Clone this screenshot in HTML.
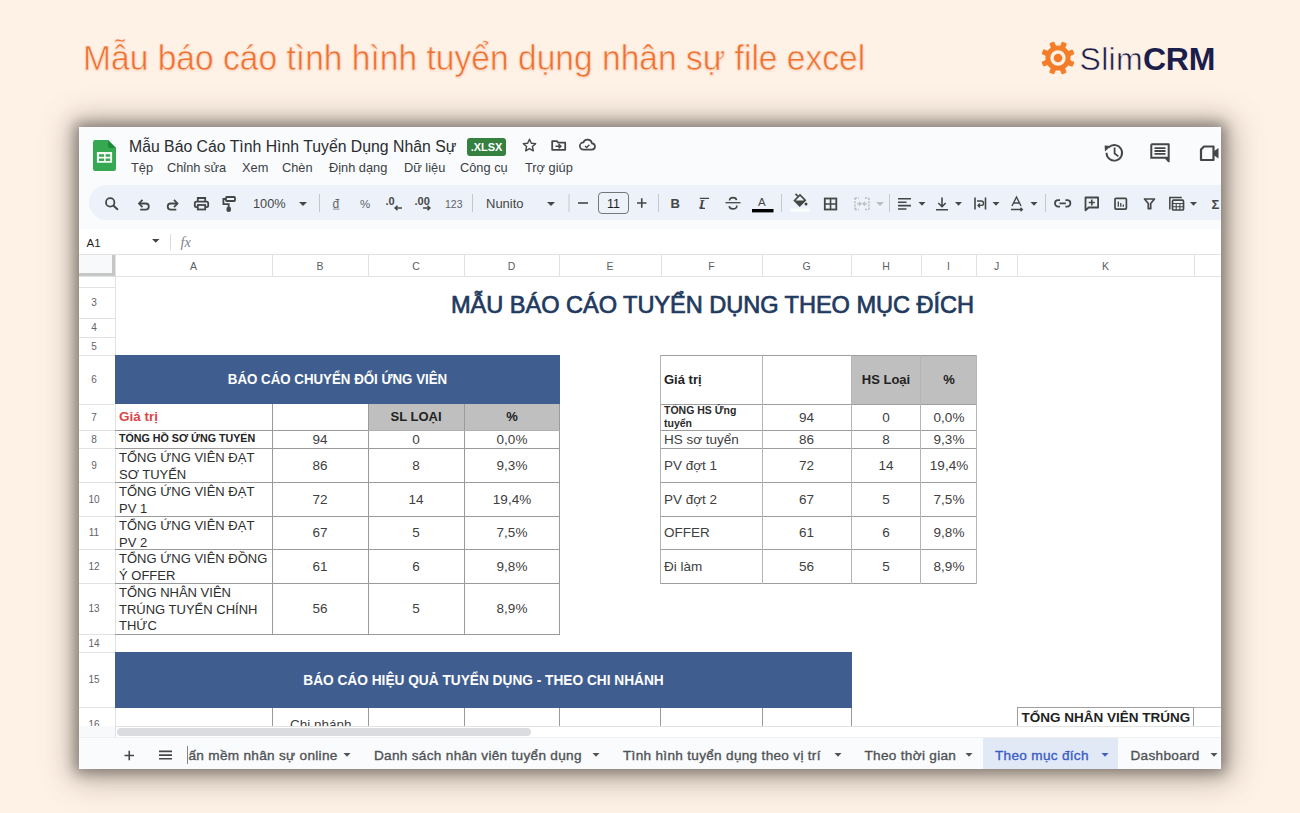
<!DOCTYPE html>
<html><head><meta charset="utf-8">
<style>
*{box-sizing:border-box}
html,body{margin:0;padding:0}
body{width:1300px;height:813px;background:#FEF1E6;position:relative;overflow:hidden;font-family:"Liberation Sans",sans-serif}
.a{position:absolute;white-space:nowrap}
#win{position:absolute;left:79px;top:127px;width:1142px;height:642px;background:#fff;overflow:hidden;box-shadow:0 0 13px 4px rgba(76,70,66,.56),2px 2px 30px 8px rgba(92,80,70,.42)}
#inner{position:absolute;left:-79px;top:-127px;width:1300px;height:813px}
.hl{position:absolute;height:1px;background:#E1E1E1}
.vl{position:absolute;width:1px;background:#E1E1E1}
.ic{position:absolute}
.tb{color:#444746}
</style></head><body>

<div class="a" id="ttl" style="left:83px;top:38.6px;font-size:33.6px;transform:scaleY(1.02);transform-origin:0 0;color:#F0702F;-webkit-text-stroke:0.5px #FEF1E6;text-shadow:0 1px 2px rgba(239,107,44,.25)">Mẫu báo cáo tình hình tuyển dụng nhân sự file excel</div>

<div id="logo" class="a" style="left:1040px;top:40px;height:36px;width:200px">
<svg class="ic" style="left:0;top:0" width="36" height="36" viewBox="-18 -18 36 36"><defs><linearGradient id="gg" x1="0" y1="-1" x2="0" y2="1"><stop offset="0" stop-color="#F5892C"/><stop offset="1" stop-color="#F47A28"/></linearGradient></defs><g fill="url(#gg)"><circle r="12.6"/><rect x="-2.6" y="-16.8" width="5.4" height="6.4" rx="1.2" transform="rotate(22.5)"/><rect x="-2.6" y="-16.8" width="5.4" height="6.4" rx="1.2" transform="rotate(67.5)"/><rect x="-2.6" y="-16.8" width="5.4" height="6.4" rx="1.2" transform="rotate(112.5)"/><rect x="-2.6" y="-16.8" width="5.4" height="6.4" rx="1.2" transform="rotate(157.5)"/><rect x="-2.6" y="-16.8" width="5.4" height="6.4" rx="1.2" transform="rotate(202.5)"/><rect x="-2.6" y="-16.8" width="5.4" height="6.4" rx="1.2" transform="rotate(247.5)"/><rect x="-2.6" y="-16.8" width="5.4" height="6.4" rx="1.2" transform="rotate(292.5)"/><rect x="-2.6" y="-16.8" width="5.4" height="6.4" rx="1.2" transform="rotate(337.5)"/></g><circle r="7.7" fill="#FEF1E6"/><circle r="4.3" fill="#F47A28"/></svg>
<div class="a" style="left:39.5px;top:1px;font-size:32px;line-height:36px;color:#1B1D4A;letter-spacing:0.3px"><span style="-webkit-text-stroke:0.55px #FEF1E6">Slim</span><b style="letter-spacing:-0.2px">CRM</b></div>
</div>

<div id="win"><div id="inner">

<!-- top chrome -->
<div class="a" style="left:79px;top:127px;width:1142px;height:102px;background:#F9FBFD"></div>
<!-- sheets icon -->
<svg class="ic" style="left:93px;top:140px" width="23" height="31" viewBox="0 0 23 31">
<path d="M2.2 0h12.8l8 8v20.8a2.2 2.2 0 0 1-2.2 2.2H2.2A2.2 2.2 0 0 1 0 28.8V2.2A2.2 2.2 0 0 1 2.2 0z" fill="#37A852"/>
<path d="M15 0l8 8h-5.8A2.2 2.2 0 0 1 15 5.8z" fill="#1E8A3C"/>
<path d="M3.9 12h15.2v10.8H3.9z M6 14.2v2.6h5v-2.6z M12.6 14.2v2.6h4.5v-2.6z M6 18.4v2.6h5v-2.6z M12.6 18.4v2.6h4.5v-2.6z" fill="#F4FBF5" fill-rule="evenodd"/>
</svg>
<div class="a" style="left:129px;top:138px;font-size:15.8px;color:#2A2C2E">Mẫu Báo Cáo Tình Hình Tuyển Dụng Nhân Sự</div>
<div class="a" style="left:467px;top:138px;width:39px;height:18px;border-radius:3px;background:#368040;color:#fff;font-size:11px;font-weight:bold;line-height:18px;text-align:center;letter-spacing:-0.1px">.XLSX</div>
<!-- star -->
<svg class="ic" style="left:521px;top:137px" width="17" height="17" viewBox="0 0 24 24"><path d="M12 3.2l2.6 5.6 6.1.6-4.6 4.1 1.3 6-5.4-3.1-5.4 3.1 1.3-6-4.6-4.1 6.1-.6z" fill="none" stroke="#444746" stroke-width="2" stroke-linejoin="round"/></svg>
<!-- folder move -->
<svg class="ic" style="left:0;top:0" width="1300" height="813"><path d="M552.2 141.2h4.6l1.4 1.5h7v7.1h-13z" fill="none" stroke="#444746" stroke-width="1.8" stroke-linejoin="round"/><path d="M555.5 146.3h5.2M558.6 144.2l2.2 2.1-2.2 2.1" fill="none" stroke="#444746" stroke-width="1.6"/>
<path d="M583.5 149.6h8.2a3.1 3.1 0 0 0 .3-6.2 4.5 4.5 0 0 0-8.6-1 3.6 3.6 0 0 0 .1 7.2z" fill="none" stroke="#444746" stroke-width="1.7"/><path d="M585 146l1.6 1.5 2.8-2.8" fill="none" stroke="#444746" stroke-width="1.3"/></svg>
<!-- menu -->
<div class="a" style="top:160px;font-size:12.8px;color:#3C4043">
<span class="a" style="left:131px">Tệp</span><span class="a" style="left:167px">Chỉnh sửa</span><span class="a" style="left:242px">Xem</span><span class="a" style="left:282px">Chèn</span><span class="a" style="left:329px">Định dạng</span><span class="a" style="left:404px">Dữ liệu</span><span class="a" style="left:460px">Công cụ</span><span class="a" style="left:525px">Trợ giúp</span>
</div>
<!-- right icons -->
<svg class="ic" style="left:0;top:0" width="1300" height="813"><path d="M1108.8 147.3A7.8 7.8 0 1 1 1106.5 152.8" fill="none" stroke="#444746" stroke-width="1.9"/><path d="M1104.6 145.6l6.2 0.4-5.8 5.6z" fill="#444746"/><path d="M1114.6 147.6v5.9l3.8 2.9" fill="none" stroke="#444746" stroke-width="1.8"/></svg>
<svg class="ic" style="left:1150px;top:143px" width="20" height="20" viewBox="0 0 20 20"><path d="M1.3 1.3h17.4v13.4H15.5l3.2 3.6V1.3" fill="none" stroke="#444746" stroke-width="2" stroke-linejoin="round"/><path d="M1.3 1.3v13.4h14.2" fill="none" stroke="#444746" stroke-width="2"/><path d="M4.5 5.2h11M4.5 8h11M4.5 10.8h11" stroke="#444746" stroke-width="1.8"/></svg>
<svg class="ic" style="left:1199px;top:145px" width="22" height="17" viewBox="0 0 22 17"><path d="M5 1.5h9.5v13.5H2V4.5z" fill="none" stroke="#444746" stroke-width="2.2" stroke-linejoin="round"/><path d="M14.5 6.5l5-3.5v10.5l-5-3.5z" fill="#444746"/></svg>
<!-- toolbar pill -->
<div class="a" style="left:89px;top:185px;width:1200px;height:35px;border-radius:18px;background:#EDF2FA"></div>

<svg class="ic" style="left:0;top:0" width="1300" height="813" viewBox="0 0 1300 813" font-family="Liberation Sans, sans-serif">
<g fill="none" stroke="#444746" stroke-width="1.8" stroke-linecap="butt">
<!-- search -->
<circle cx="110.2" cy="202.4" r="4.2"/><path d="M113.3 205.5l4.6 4.2" stroke-width="2"/>
<!-- undo -->
<path d="M139.5 203.5h6.2a3.1 3.1 0 0 1 0 6.2h-5.5"/><path d="M142.5 199.8l-3.5 3.7 3.5 3.7"/>
<!-- redo -->
<path d="M177 203.5h-6.2a3.1 3.1 0 0 0 0 6.2h5.5"/><path d="M174 199.8l3.5 3.7-3.5 3.7"/>
<!-- print -->
<path d="M197.8 201.2v-3.2h7.4v3.2"/><rect x="194.8" y="201.6" width="13.4" height="5.6" rx="1.6"/><rect x="197.8" y="205" width="7.4" height="4.5" fill="#EDF2FA"/>
<!-- paint format -->
<rect x="226" y="197" width="9" height="4" rx="0.8"/><path d="M226 199h-2.6v5.2h5.3v3.3"/><rect x="227" y="207.3" width="3.4" height="4" rx="0.6" fill="#444746" stroke-width="1"/>
<!-- dd arrows -->
</g>
<g fill="#444746">
<path d="M299 202h8l-4 4z"/>
<path d="M547 202h8l-4 4z"/>
<path d="M876 202h8l-4 4z" fill="#B9BCC0"/>
<path d="M918.5 202h7l-3.5 3.8z"/>
<path d="M955 202h7l-3.5 3.8z"/>
<path d="M992.5 202h7l-3.5 3.8z"/>
<path d="M1030.5 202h7l-3.5 3.8z"/>
<path d="M1190 202h7l-3.5 3.8z"/>
</g>
<!-- separators -->
<g fill="#C7C7C7"><rect x="319" y="194" width="1" height="18"/><rect x="472" y="194" width="1" height="18"/><rect x="568.5" y="194" width="1" height="18"/><rect x="658" y="194" width="1" height="18"/><rect x="781" y="194" width="1" height="18"/><rect x="889" y="194" width="1" height="18"/><rect x="1045" y="194" width="1" height="18"/></g>
<text x="253" y="208" font-size="12.8" fill="#444746">100%</text>
<text x="332.5" y="208" font-size="12" fill="#5F6368">đ</text><rect x="333" y="208.6" width="6.5" height="1" fill="#8A8D91"/>
<text x="360" y="208" font-size="11.5" fill="#5F6368">%</text>
<text x="385.5" y="204.5" font-size="11" font-weight="bold" fill="#444746">.0</text>
<text x="414.5" y="204.5" font-size="11" font-weight="bold" fill="#444746">.00</text>
<g fill="none" stroke="#444746" stroke-width="1.5"><path d="M395 208h7M397.5 205.7l-2.4 2.3 2.4 2.3"/><path d="M423 208h7M427.5 205.7l2.4 2.3-2.4 2.3"/></g>
<text x="445" y="207.5" font-size="10.5" fill="#5F6368">123</text>
<text x="486" y="208" font-size="13" fill="#444746">Nunito</text>
<path d="M578 203h10" stroke="#444746" stroke-width="1.6"/>
<rect x="598.5" y="192.5" width="30" height="21" rx="3.5" fill="none" stroke="#747775" stroke-width="1"/>
<text x="613.5" y="207.5" font-size="12.5" fill="#1F1F1F" text-anchor="middle">11</text>
<path d="M637 203h9.5M641.75 198.2v9.6" stroke="#444746" stroke-width="1.6"/>
<text x="670.5" y="208" font-size="13" font-weight="bold" fill="#444746">B</text>
<text x="699" y="208" font-size="13.5" font-style="italic" font-weight="bold" fill="#444746" font-family="Liberation Serif, serif">I</text>
<path d="M699.8 198.4h9.2M699.6 208.4h5.4" stroke="#444746" stroke-width="1.4"/>
<!-- strikethrough S -->
<path d="M729.5 200.6c0-2.5 2-3 3.5-3s3.3.6 3.5 2.6M736.8 205.5c0.3 2.6-1.6 3.4-3.8 3.4s-3.6-0.9-3.8-2.8" fill="none" stroke="#444746" stroke-width="1.6"/>
<path d="M725.5 202.7h15" stroke="#444746" stroke-width="1.3"/>
<text x="758" y="206" font-size="11.5" fill="#444746">A</text>
<rect x="752" y="209" width="21.5" height="3.4" fill="#000"/>
<!-- fill bucket -->
<path d="M795.5 193.8l2.2 2.2M794.5 200.5l5.5-5.5 5.2 5.2-5.5 5.5z" fill="none" stroke="#444746" stroke-width="1.7"/><path d="M794.5 200.5h10.7l-5.3 5.4z" fill="#444746"/><circle cx="806" cy="204" r="1.5" fill="#444746"/>
<rect x="790" y="208.5" width="20" height="3.5" rx="1.5" fill="#FAFBFD"/>
<!-- borders -->
<rect x="824.8" y="198.5" width="11.5" height="11" fill="none" stroke="#444746" stroke-width="1.8"/><path d="M830.55 198.5v11M824.8 204h11.5" stroke="#444746" stroke-width="1.6"/>
<!-- merge disabled -->
<g fill="none" stroke="#B9BCC0" stroke-width="1.5" stroke-dasharray="2 1.2"><path d="M855 198v11.5M869 198v11.5M855 198h4M855 209.5h4M865 198h4M865 209.5h4"/></g><path d="M857 203.8h4M863 203.8h4M859 202l2 1.8-2 1.8M865 202l-2 1.8 2 1.8" fill="none" stroke="#B9BCC0" stroke-width="1.2"/>
<!-- align left -->
<path d="M898 198.8h13M898 202.2h8.5M898 205.6h13M898 209h8.5" stroke="#444746" stroke-width="1.6"/>
<path d="M898 198.8h13M898 202.2h13M898 205.6h13M898 209h13" stroke="#444746" stroke-width="1.6" opacity="0"/>
<!-- valign bottom -->
<path d="M942 197.5v9M938.3 203l3.7 3.7 3.7-3.7M936 209.8h12" fill="none" stroke="#444746" stroke-width="1.6"/>
<!-- wrap -->
<path d="M975 197.5v12M985.5 197.5v12" stroke="#444746" stroke-width="1.6"/><path d="M977 201h4.3a2.2 2.2 0 0 1 0 4.4h-2.5M980 203.4l-2 2 2 2" fill="none" stroke="#444746" stroke-width="1.4"/>
<!-- rotate A -->
<path d="M1012 206l4.5-9 4.5 9M1013.6 203h5.8M1011 209.5h11M1020.5 207.8l1.8 1.7-1.8 1.7" fill="none" stroke="#444746" stroke-width="1.4"/>
<!-- link -->
<path d="M1060 200.2h-1.8a3.2 3.2 0 0 0 0 6.4h1.8M1065.4 200.2h1.8a3.2 3.2 0 0 1 0 6.4h-1.8M1059.5 203.4h6.4" fill="none" stroke="#444746" stroke-width="1.8"/>
<!-- comment add -->
<path d="M1085.5 197.5h12.6v10h-9.5l-3.1 2.8z" fill="none" stroke="#444746" stroke-width="1.8" stroke-linejoin="round"/><path d="M1091.8 199.5v6M1088.8 202.5h6" stroke="#444746" stroke-width="1.6"/>
<!-- chart -->
<rect x="1115" y="198.3" width="11.4" height="10.8" rx="1" fill="none" stroke="#444746" stroke-width="1.7"/><path d="M1118.3 201.5v5.3M1120.8 203v3.8M1123.3 204.5v2.3" stroke="#444746" stroke-width="1.3"/>
<!-- filter -->
<path d="M1144.5 199h10l-3.8 4.5v5.2h-2.4v-5.2z" fill="none" stroke="#444746" stroke-width="1.7" stroke-linejoin="round"/>
<!-- table functions -->
<path d="M1169.8 209.5v-12h12" fill="none" stroke="#444746" stroke-width="1.5"/><rect x="1172.5" y="200.2" width="11" height="9.8" rx="1" fill="none" stroke="#444746" stroke-width="1.7"/><path d="M1172.5 203.5h11M1176.2 203.5v6.5M1179.9 203.5v6.5M1172.5 206.8h11" stroke="#444746" stroke-width="1.1"/>
<text x="1211.5" y="208.5" font-size="13" font-weight="bold" fill="#444746">Σ</text>
</svg>
<!--GRID-->
<div class="a" style="left:79px;top:229px;width:1142px;height:26px;background:#FFFFFF"></div>
<div class="a" style="left:86.5px;top:237.5px;font-size:11.5px;color:#1F1F1F;font-weight:normal;line-height:1;">A1</div>
<svg class="ic" style="left:0;top:0" width="1300" height="813"><path d="M152 239h7.5l-3.75 3.8z" fill="#444746"/><rect x="170" y="234" width="1" height="16" fill="#DADCE0"/><text x="180.5" y="247" font-family="Liberation Serif, serif" font-style="italic" font-size="14.5" fill="#80868B">fx</text></svg>
<div class="a" style="left:79px;top:255px;width:1142px;height:21px;background:#FFFFFF"></div>
<div class="a" style="left:79px;top:254px;width:1142px;height:1px;background:#E1E3E3"></div>
<div class="a" style="left:79px;top:276px;width:1142px;height:1px;background:#E1E3E3"></div>
<div class="a" style="left:115px;top:255px;width:1px;height:21px;background:#E1E3E3"></div>
<div class="a" style="left:115px;top:261px;width:157px;text-align:center;font-size:10.5px;color:#5A5E62;font-weight:normal;line-height:1;">A</div>
<div class="a" style="left:272px;top:255px;width:1px;height:21px;background:#E1E3E3"></div>
<div class="a" style="left:272px;top:261px;width:96px;text-align:center;font-size:10.5px;color:#5A5E62;font-weight:normal;line-height:1;">B</div>
<div class="a" style="left:368px;top:255px;width:1px;height:21px;background:#E1E3E3"></div>
<div class="a" style="left:368px;top:261px;width:96px;text-align:center;font-size:10.5px;color:#5A5E62;font-weight:normal;line-height:1;">C</div>
<div class="a" style="left:464px;top:255px;width:1px;height:21px;background:#E1E3E3"></div>
<div class="a" style="left:464px;top:261px;width:95px;text-align:center;font-size:10.5px;color:#5A5E62;font-weight:normal;line-height:1;">D</div>
<div class="a" style="left:559px;top:255px;width:1px;height:21px;background:#E1E3E3"></div>
<div class="a" style="left:559px;top:261px;width:102px;text-align:center;font-size:10.5px;color:#5A5E62;font-weight:normal;line-height:1;">E</div>
<div class="a" style="left:661px;top:255px;width:1px;height:21px;background:#E1E3E3"></div>
<div class="a" style="left:661px;top:261px;width:101px;text-align:center;font-size:10.5px;color:#5A5E62;font-weight:normal;line-height:1;">F</div>
<div class="a" style="left:762px;top:255px;width:1px;height:21px;background:#E1E3E3"></div>
<div class="a" style="left:762px;top:261px;width:89px;text-align:center;font-size:10.5px;color:#5A5E62;font-weight:normal;line-height:1;">G</div>
<div class="a" style="left:851px;top:255px;width:1px;height:21px;background:#E1E3E3"></div>
<div class="a" style="left:851px;top:261px;width:70px;text-align:center;font-size:10.5px;color:#5A5E62;font-weight:normal;line-height:1;">H</div>
<div class="a" style="left:921px;top:255px;width:1px;height:21px;background:#E1E3E3"></div>
<div class="a" style="left:921px;top:261px;width:55px;text-align:center;font-size:10.5px;color:#5A5E62;font-weight:normal;line-height:1;">I</div>
<div class="a" style="left:976px;top:255px;width:1px;height:21px;background:#E1E3E3"></div>
<div class="a" style="left:976px;top:261px;width:41px;text-align:center;font-size:10.5px;color:#5A5E62;font-weight:normal;line-height:1;">J</div>
<div class="a" style="left:1017px;top:255px;width:1px;height:21px;background:#E1E3E3"></div>
<div class="a" style="left:1017px;top:261px;width:177px;text-align:center;font-size:10.5px;color:#5A5E62;font-weight:normal;line-height:1;">K</div>
<div class="a" style="left:1194px;top:255px;width:1px;height:21px;background:#E1E3E3"></div>
<div class="a" style="left:1194px;top:261px;width:106px;text-align:center;font-size:10.5px;color:#5A5E62;font-weight:normal;line-height:1;">L</div>
<div class="a" style="left:79px;top:255px;width:36px;height:21px;background:#F8F9FA"></div>
<div class="a" style="left:112px;top:255px;width:3px;height:21px;background:#C4C7C5"></div>
<div class="a" style="left:79px;top:273px;width:36px;height:3px;background:#C4C7C5"></div>
<div class="a" style="left:115px;top:276px;width:1px;height:450px;background:#E1E3E3"></div>
<div class="a" style="left:79px;top:287px;width:36px;height:1px;background:#E1E3E3"></div>
<div class="a" style="left:79px;top:318px;width:36px;height:1px;background:#E1E3E3"></div>
<div class="a" style="left:76px;top:298.0px;width:36px;text-align:center;font-size:10px;color:#5F6368;font-weight:normal;line-height:1;">3</div>
<div class="a" style="left:79px;top:337px;width:36px;height:1px;background:#E1E3E3"></div>
<div class="a" style="left:76px;top:323.0px;width:36px;text-align:center;font-size:10px;color:#5F6368;font-weight:normal;line-height:1;">4</div>
<div class="a" style="left:79px;top:355px;width:36px;height:1px;background:#E1E3E3"></div>
<div class="a" style="left:76px;top:341.5px;width:36px;text-align:center;font-size:10px;color:#5F6368;font-weight:normal;line-height:1;">5</div>
<div class="a" style="left:79px;top:404px;width:36px;height:1px;background:#E1E3E3"></div>
<div class="a" style="left:76px;top:375.0px;width:36px;text-align:center;font-size:10px;color:#5F6368;font-weight:normal;line-height:1;">6</div>
<div class="a" style="left:79px;top:430px;width:36px;height:1px;background:#E1E3E3"></div>
<div class="a" style="left:76px;top:412.5px;width:36px;text-align:center;font-size:10px;color:#5F6368;font-weight:normal;line-height:1;">7</div>
<div class="a" style="left:79px;top:448px;width:36px;height:1px;background:#E1E3E3"></div>
<div class="a" style="left:76px;top:434.5px;width:36px;text-align:center;font-size:10px;color:#5F6368;font-weight:normal;line-height:1;">8</div>
<div class="a" style="left:79px;top:482px;width:36px;height:1px;background:#E1E3E3"></div>
<div class="a" style="left:76px;top:460.5px;width:36px;text-align:center;font-size:10px;color:#5F6368;font-weight:normal;line-height:1;">9</div>
<div class="a" style="left:79px;top:516px;width:36px;height:1px;background:#E1E3E3"></div>
<div class="a" style="left:76px;top:494.5px;width:36px;text-align:center;font-size:10px;color:#5F6368;font-weight:normal;line-height:1;">10</div>
<div class="a" style="left:79px;top:549px;width:36px;height:1px;background:#E1E3E3"></div>
<div class="a" style="left:76px;top:528.0px;width:36px;text-align:center;font-size:10px;color:#5F6368;font-weight:normal;line-height:1;">11</div>
<div class="a" style="left:79px;top:583px;width:36px;height:1px;background:#E1E3E3"></div>
<div class="a" style="left:76px;top:561.5px;width:36px;text-align:center;font-size:10px;color:#5F6368;font-weight:normal;line-height:1;">12</div>
<div class="a" style="left:79px;top:634px;width:36px;height:1px;background:#E1E3E3"></div>
<div class="a" style="left:76px;top:604.0px;width:36px;text-align:center;font-size:10px;color:#5F6368;font-weight:normal;line-height:1;">13</div>
<div class="a" style="left:79px;top:652px;width:36px;height:1px;background:#E1E3E3"></div>
<div class="a" style="left:76px;top:638.5px;width:36px;text-align:center;font-size:10px;color:#5F6368;font-weight:normal;line-height:1;">14</div>
<div class="a" style="left:79px;top:707px;width:36px;height:1px;background:#E1E3E3"></div>
<div class="a" style="left:76px;top:675.0px;width:36px;text-align:center;font-size:10px;color:#5F6368;font-weight:normal;line-height:1;">15</div>
<div class="a" style="left:79px;top:741px;width:36px;height:1px;background:#E1E3E3"></div>
<div class="a" style="left:76px;top:719.5px;width:36px;text-align:center;font-size:10px;color:#5F6368;font-weight:normal;line-height:1;">16</div>
<div class="a" style="left:451px;top:293.5px;font-size:23.6px;color:#1F3A60;font-weight:normal;line-height:1;letter-spacing:-0.05px;-webkit-text-stroke:0.7px #1F3A60">MẪU BÁO CÁO TUYỂN DỤNG THEO MỤC ĐÍCH</div>
<div class="a" style="left:115px;top:355px;width:445px;height:49px;background:#3F5E8F"></div>
<div class="a" style="left:115px;top:371.8px;width:445px;text-align:center;font-size:13.3px;color:#fff;font-weight:bold;line-height:1;transform:scaleY(1.12);transform-origin:0 0">BÁO CÁO CHUYỂN ĐỔI ỨNG VIÊN</div>
<div class="a" style="left:368px;top:404px;width:192px;height:26px;background:#BFBFBF"></div>
<div class="a" style="left:119px;top:410px;font-size:13.5px;color:#D9474A;font-weight:bold;line-height:1;">Giá trị</div>
<div class="a" style="left:368px;top:410px;width:96px;text-align:center;font-size:13px;color:#222;font-weight:bold;line-height:1;">SL LOẠI</div>
<div class="a" style="left:464px;top:410px;width:96px;text-align:center;font-size:13px;color:#222;font-weight:bold;line-height:1;">%</div>
<div class="a" style="left:115px;top:430px;width:445px;height:1px;background:#9A9A9A"></div>
<div class="a" style="left:115px;top:448px;width:445px;height:1px;background:#9A9A9A"></div>
<div class="a" style="left:115px;top:482px;width:445px;height:1px;background:#9A9A9A"></div>
<div class="a" style="left:115px;top:516px;width:445px;height:1px;background:#9A9A9A"></div>
<div class="a" style="left:115px;top:549px;width:445px;height:1px;background:#9A9A9A"></div>
<div class="a" style="left:115px;top:583px;width:445px;height:1px;background:#9A9A9A"></div>
<div class="a" style="left:115px;top:634px;width:445px;height:1px;background:#9A9A9A"></div>
<div class="a" style="left:272px;top:404px;width:1px;height:230px;background:#9A9A9A"></div>
<div class="a" style="left:368px;top:404px;width:1px;height:230px;background:#9A9A9A"></div>
<div class="a" style="left:464px;top:404px;width:1px;height:230px;background:#9A9A9A"></div>
<div class="a" style="left:559px;top:404px;width:1px;height:230px;background:#9A9A9A"></div>
<div class="a" style="left:368px;top:430px;width:192px;height:1px;background:#AFAFAF"></div>
<div class="a" style="left:119px;top:432.5px;font-size:10.7px;color:#222;font-weight:bold;line-height:1;">TỔNG HỒ SƠ ỨNG TUYỂN</div>
<div class="a" style="left:272px;top:432.5px;width:96px;text-align:center;font-size:13.5px;color:#404040;font-weight:normal;line-height:1;">94</div>
<div class="a" style="left:368px;top:432.5px;width:96px;text-align:center;font-size:13.5px;color:#404040;font-weight:normal;line-height:1;">0</div>
<div class="a" style="left:464px;top:432.5px;width:96px;text-align:center;font-size:13.5px;color:#404040;font-weight:normal;line-height:1;">0,0%</div>
<div class="a" style="left:119px;top:450px;font-size:13px;line-height:16.5px;color:#2E2E2E">TỔNG ỨNG VIÊN ĐẠT<br>SƠ TUYỂN</div>
<div class="a" style="left:272px;top:458.5px;width:96px;text-align:center;font-size:13.5px;color:#404040;font-weight:normal;line-height:1;">86</div>
<div class="a" style="left:368px;top:458.5px;width:96px;text-align:center;font-size:13.5px;color:#404040;font-weight:normal;line-height:1;">8</div>
<div class="a" style="left:464px;top:458.5px;width:96px;text-align:center;font-size:13.5px;color:#404040;font-weight:normal;line-height:1;">9,3%</div>
<div class="a" style="left:119px;top:484px;font-size:13px;line-height:16.5px;color:#2E2E2E">TỔNG ỨNG VIÊN ĐẠT<br>PV 1</div>
<div class="a" style="left:272px;top:492.5px;width:96px;text-align:center;font-size:13.5px;color:#404040;font-weight:normal;line-height:1;">72</div>
<div class="a" style="left:368px;top:492.5px;width:96px;text-align:center;font-size:13.5px;color:#404040;font-weight:normal;line-height:1;">14</div>
<div class="a" style="left:464px;top:492.5px;width:96px;text-align:center;font-size:13.5px;color:#404040;font-weight:normal;line-height:1;">19,4%</div>
<div class="a" style="left:119px;top:518px;font-size:13px;line-height:16.5px;color:#2E2E2E">TỔNG ỨNG VIÊN ĐẠT<br>PV 2</div>
<div class="a" style="left:272px;top:526.0px;width:96px;text-align:center;font-size:13.5px;color:#404040;font-weight:normal;line-height:1;">67</div>
<div class="a" style="left:368px;top:526.0px;width:96px;text-align:center;font-size:13.5px;color:#404040;font-weight:normal;line-height:1;">5</div>
<div class="a" style="left:464px;top:526.0px;width:96px;text-align:center;font-size:13.5px;color:#404040;font-weight:normal;line-height:1;">7,5%</div>
<div class="a" style="left:119px;top:551px;font-size:13px;line-height:16.5px;color:#2E2E2E">TỔNG ỨNG VIÊN ĐỒNG<br>Ý OFFER</div>
<div class="a" style="left:272px;top:559.5px;width:96px;text-align:center;font-size:13.5px;color:#404040;font-weight:normal;line-height:1;">61</div>
<div class="a" style="left:368px;top:559.5px;width:96px;text-align:center;font-size:13.5px;color:#404040;font-weight:normal;line-height:1;">6</div>
<div class="a" style="left:464px;top:559.5px;width:96px;text-align:center;font-size:13.5px;color:#404040;font-weight:normal;line-height:1;">9,8%</div>
<div class="a" style="left:119px;top:585px;font-size:13px;line-height:16.5px;color:#2E2E2E">TỔNG NHÂN VIÊN<br>TRÚNG TUYỂN CHÍNH<br>THỨC</div>
<div class="a" style="left:272px;top:602.0px;width:96px;text-align:center;font-size:13.5px;color:#404040;font-weight:normal;line-height:1;">56</div>
<div class="a" style="left:368px;top:602.0px;width:96px;text-align:center;font-size:13.5px;color:#404040;font-weight:normal;line-height:1;">5</div>
<div class="a" style="left:464px;top:602.0px;width:96px;text-align:center;font-size:13.5px;color:#404040;font-weight:normal;line-height:1;">8,9%</div>
<div class="a" style="left:851px;top:355px;width:70px;height:49px;background:#BFBFBF"></div>
<div class="a" style="left:921px;top:355px;width:56px;height:49px;background:#BFBFBF"></div>
<div class="a" style="left:664px;top:372.5px;font-size:13px;color:#222;font-weight:bold;line-height:1;">Giá trị</div>
<div class="a" style="left:851px;top:372.5px;width:70px;text-align:center;font-size:13px;color:#222;font-weight:bold;line-height:1;">HS Loại</div>
<div class="a" style="left:921px;top:372.5px;width:56px;text-align:center;font-size:13px;color:#222;font-weight:bold;line-height:1;">%</div>
<div class="a" style="left:660px;top:355px;width:317px;height:1px;background:#9E9E9E"></div>
<div class="a" style="left:660px;top:404px;width:317px;height:1px;background:#9E9E9E"></div>
<div class="a" style="left:660px;top:430px;width:317px;height:1px;background:#9E9E9E"></div>
<div class="a" style="left:660px;top:448px;width:317px;height:1px;background:#9E9E9E"></div>
<div class="a" style="left:660px;top:482px;width:317px;height:1px;background:#9E9E9E"></div>
<div class="a" style="left:660px;top:516px;width:317px;height:1px;background:#9E9E9E"></div>
<div class="a" style="left:660px;top:549px;width:317px;height:1px;background:#9E9E9E"></div>
<div class="a" style="left:660px;top:583px;width:317px;height:1px;background:#9E9E9E"></div>
<div class="a" style="left:660px;top:355px;width:1px;height:229px;background:#B5B5B5"></div>
<div class="a" style="left:762px;top:355px;width:1px;height:229px;background:#B5B5B5"></div>
<div class="a" style="left:851px;top:355px;width:1px;height:229px;background:#B5B5B5"></div>
<div class="a" style="left:920px;top:355px;width:1px;height:229px;background:#B5B5B5"></div>
<div class="a" style="left:976px;top:355px;width:1px;height:229px;background:#B5B5B5"></div>
<div class="a" style="left:664px;top:404px;font-size:10.5px;line-height:12.6px;color:#2A2A2A;font-weight:bold">TỔNG HS Ứng<br>tuyển</div>
<div class="a" style="left:762px;top:410.5px;width:89px;text-align:center;font-size:13.5px;color:#404040;font-weight:normal;line-height:1;">94</div>
<div class="a" style="left:851px;top:410.5px;width:70px;text-align:center;font-size:13.5px;color:#404040;font-weight:normal;line-height:1;">0</div>
<div class="a" style="left:921px;top:410.5px;width:56px;text-align:center;font-size:13.5px;color:#404040;font-weight:normal;line-height:1;">0,0%</div>
<div class="a" style="left:664px;top:432.5px;font-size:13.5px;color:#404040;font-weight:normal;line-height:1;">HS sơ tuyển</div>
<div class="a" style="left:762px;top:432.5px;width:89px;text-align:center;font-size:13.5px;color:#404040;font-weight:normal;line-height:1;">86</div>
<div class="a" style="left:851px;top:432.5px;width:70px;text-align:center;font-size:13.5px;color:#404040;font-weight:normal;line-height:1;">8</div>
<div class="a" style="left:921px;top:432.5px;width:56px;text-align:center;font-size:13.5px;color:#404040;font-weight:normal;line-height:1;">9,3%</div>
<div class="a" style="left:664px;top:458.5px;font-size:13.5px;color:#404040;font-weight:normal;line-height:1;">PV đợt 1</div>
<div class="a" style="left:762px;top:458.5px;width:89px;text-align:center;font-size:13.5px;color:#404040;font-weight:normal;line-height:1;">72</div>
<div class="a" style="left:851px;top:458.5px;width:70px;text-align:center;font-size:13.5px;color:#404040;font-weight:normal;line-height:1;">14</div>
<div class="a" style="left:921px;top:458.5px;width:56px;text-align:center;font-size:13.5px;color:#404040;font-weight:normal;line-height:1;">19,4%</div>
<div class="a" style="left:664px;top:492.5px;font-size:13.5px;color:#404040;font-weight:normal;line-height:1;">PV đợt 2</div>
<div class="a" style="left:762px;top:492.5px;width:89px;text-align:center;font-size:13.5px;color:#404040;font-weight:normal;line-height:1;">67</div>
<div class="a" style="left:851px;top:492.5px;width:70px;text-align:center;font-size:13.5px;color:#404040;font-weight:normal;line-height:1;">5</div>
<div class="a" style="left:921px;top:492.5px;width:56px;text-align:center;font-size:13.5px;color:#404040;font-weight:normal;line-height:1;">7,5%</div>
<div class="a" style="left:664px;top:526.0px;font-size:13.5px;color:#404040;font-weight:normal;line-height:1;">OFFER</div>
<div class="a" style="left:762px;top:526.0px;width:89px;text-align:center;font-size:13.5px;color:#404040;font-weight:normal;line-height:1;">61</div>
<div class="a" style="left:851px;top:526.0px;width:70px;text-align:center;font-size:13.5px;color:#404040;font-weight:normal;line-height:1;">6</div>
<div class="a" style="left:921px;top:526.0px;width:56px;text-align:center;font-size:13.5px;color:#404040;font-weight:normal;line-height:1;">9,8%</div>
<div class="a" style="left:664px;top:559.5px;font-size:13.5px;color:#404040;font-weight:normal;line-height:1;">Đi làm</div>
<div class="a" style="left:762px;top:559.5px;width:89px;text-align:center;font-size:13.5px;color:#404040;font-weight:normal;line-height:1;">56</div>
<div class="a" style="left:851px;top:559.5px;width:70px;text-align:center;font-size:13.5px;color:#404040;font-weight:normal;line-height:1;">5</div>
<div class="a" style="left:921px;top:559.5px;width:56px;text-align:center;font-size:13.5px;color:#404040;font-weight:normal;line-height:1;">8,9%</div>
<div class="a" style="left:115px;top:652px;width:737px;height:56px;background:#3F5E8F"></div>
<div class="a" style="left:115px;top:673px;width:737px;text-align:center;font-size:13.7px;color:#fff;font-weight:bold;line-height:1;transform:scaleY(1.12);transform-origin:0 0">BÁO CÁO HIỆU QUẢ TUYỂN DỤNG - THEO CHI NHÁNH</div>
<div class="a" style="left:272px;top:708px;width:1px;height:18px;background:#9A9A9A"></div>
<div class="a" style="left:368px;top:708px;width:1px;height:18px;background:#9A9A9A"></div>
<div class="a" style="left:464px;top:708px;width:1px;height:18px;background:#9A9A9A"></div>
<div class="a" style="left:559px;top:708px;width:1px;height:18px;background:#9A9A9A"></div>
<div class="a" style="left:660px;top:708px;width:1px;height:18px;background:#9A9A9A"></div>
<div class="a" style="left:762px;top:708px;width:1px;height:18px;background:#9A9A9A"></div>
<div class="a" style="left:851px;top:708px;width:1px;height:18px;background:#9A9A9A"></div>
<div class="a" style="left:290px;top:718px;font-size:13.5px;color:#404040;font-weight:normal;line-height:1;">Chi nhánh</div>
<div class="a" style="left:1017px;top:707px;width:177px;height:30px;border:1px solid #9E9E9E"></div>
<div class="a" style="left:1194px;top:707px;width:27px;height:1px;background:#B0B0B0"></div>
<div class="a" style="left:1021.5px;top:710.5px;font-size:13.5px;color:#1F1F1F;font-weight:bold;line-height:1;">TỔNG NHÂN VIÊN TRÚNG</div>
<div class="a" style="left:79px;top:726px;width:1142px;height:11px;background:#FFFFFF"></div>
<div class="a" style="left:79px;top:726px;width:1142px;height:1px;background:#E1E3E3"></div>
<div class="a" style="left:79px;top:726px;width:36px;height:11px;background:#F8F9FA"></div>
<div class="a" style="left:117px;top:728px;width:414px;height:8px;border-radius:4px;background:#DADCE0"></div>
<div class="a" style="left:79px;top:737px;width:1142px;height:32px;background:#F9FBFD"></div>
<div class="a" style="left:79px;top:737px;width:1142px;height:1px;background:#EEF0F2"></div>
<div class="a" style="left:115px;top:726px;width:1px;height:11px;background:#E1E3E3"></div>
<svg class="ic" style="left:0;top:0" width="1300" height="813"><path d="M124.5 755.5h9.5M129.25 750.8v9.4" stroke="#444746" stroke-width="1.6"/><path d="M159 751.4h13M159 755.1h13M159 758.8h13" stroke="#444746" stroke-width="1.6"/><rect x="187" y="746" width="1" height="18" fill="#80868B"/></svg>
<div class="a" style="left:983px;top:738px;width:135px;height:31px;background:#E1E9F7"></div>
<div class="a" style="left:188.5px;top:748.5px;font-size:13.6px;color:#505356;font-weight:normal;line-height:1;letter-spacing:0.3px;-webkit-text-stroke:0.35px #505356">ấn mềm nhân sự online</div>
<div class="a" style="left:374px;top:748.5px;font-size:13.6px;color:#505356;font-weight:normal;line-height:1;letter-spacing:0.3px;-webkit-text-stroke:0.35px #505356">Danh sách nhân viên tuyển dụng</div>
<div class="a" style="left:623px;top:748.5px;font-size:13.6px;color:#505356;font-weight:normal;line-height:1;letter-spacing:0.3px;-webkit-text-stroke:0.35px #505356">Tình hình tuyển dụng theo vị trí</div>
<div class="a" style="left:864.5px;top:748.5px;font-size:13.6px;color:#505356;font-weight:normal;line-height:1;letter-spacing:0.3px;-webkit-text-stroke:0.35px #505356">Theo thời gian</div>
<div class="a" style="left:995px;top:748.5px;font-size:13.6px;color:#3A5CC5;font-weight:normal;line-height:1;letter-spacing:0.3px;-webkit-text-stroke:0.35px #3A5CC5">Theo mục đích</div>
<div class="a" style="left:1130.5px;top:748.5px;font-size:13.6px;color:#505356;font-weight:normal;line-height:1;letter-spacing:0.3px;-webkit-text-stroke:0.35px #505356">Dashboard</div>
<svg class="ic" style="left:0;top:0" width="1300" height="813"><path d="M343.5 753h7l-3.5 3.8z" fill="#505356"/><path d="M592.5 753h7l-3.5 3.8z" fill="#505356"/><path d="M834.5 753h7l-3.5 3.8z" fill="#505356"/><path d="M965.5 753h7l-3.5 3.8z" fill="#505356"/><path d="M1101.5 753h7l-3.5 3.8z" fill="#3A5CC5"/><path d="M1210.5 753h7l-3.5 3.8z" fill="#505356"/></svg>
<!--/GRID-->
</div></div>

</body></html>
